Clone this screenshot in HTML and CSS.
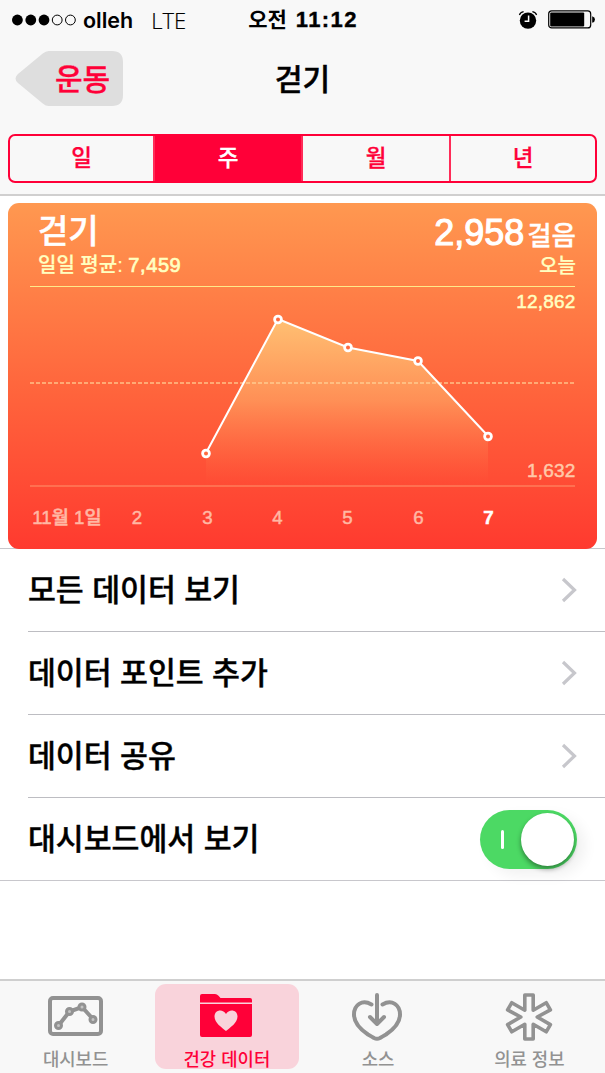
FILE: index.html
```
<!DOCTYPE html>
<html lang="ko">
<head>
    <meta charset="UTF-8">
    <meta name="viewport" content="width=device-width, initial-scale=1.0">
    <title>걷기</title>
    <link rel="stylesheet" href="styles.css">
</head>
<body>
    <header class="header">
        <div class="status">
            <div class="status-left">
                <svg class="signal" width="65" height="12" viewBox="0 0 65 12">
                    <circle cx="5.4" cy="6" r="5.4" />
                    <circle cx="18.8" cy="6" r="5.4" />
                    <circle cx="32" cy="6" r="5.4" />
                    <circle class="empty" cx="45.200" cy="6" r="4.9" />
                    <circle class="empty" cx="58.400" cy="6" r="4.9" />
                </svg>
                <span class="carrier">olleh</span>
                <span class="network">LTE</span>
            </div>
            <div class="clock"><span class="clock-ampm">오전</span><span>11:12</span></div>
            <div class="status-right">
                <svg width="20" height="20" viewBox="0 0 20 20">
                    <circle cx="10" cy="10.6" r="8.2" />
                    <path d="M1.4 5 Q2.4 2 5.6 1.6 M14.4 1.6 Q17.6 2 18.6 5" fill="none" stroke="#000" stroke-width="1.2" />
                    <path d="M10.6 5.5 V11.3 H6.6" fill="none" stroke="#fff" stroke-width="1.5" />
                </svg>
                <svg width="48" height="19" viewBox="0 0 48 19">
                    <rect x="0.7" y="0.9" width="42" height="17" rx="3" fill="none" stroke="#000" stroke-width="1.2" />
                    <rect x="2.2" y="2.4" width="34" height="14" rx="1" />
                    <path d="M44.2 6.2 Q47 7 47 9.5 T44.2 12.8 Z" />
                </svg>
            </div>
        </div>

        <nav class="nav">
            <a class="back">
                <svg class="back-shape" width="108" height="55" viewBox="0 0 109 55" preserveAspectRatio="none">
                    <path d="M34 0 H98 Q109 0 109 11 V44 Q109 55 98 55 H34 Q31 55 28 52.5 L3 32 Q-2 27.500 3 23 L28 2.500 Q31 0 34 0 Z" />
                </svg>
                <span>운동</span>
            </a>
            <h1 class="title">걷기</h1>
        </nav>

        <div class="segments">
            <span class="segment">일</span>
            <span class="segment active">주</span>
            <span class="segment">월</span>
            <span class="segment">년</span>
        </div>
    </header>

    <main>
        <section class="card">
            <div class="card-top">
                <div class="card-info">
                    <h2 class="card-title">걷기</h2>
                    <p class="card-text">일일 평균: <span class="num">7,459</span></p>
                </div>
                <div class="card-info right">
                    <p class="card-value"><span class="big">2,958</span>걸음</p>
                    <p class="card-text">오늘</p>
                </div>
            </div>
            <svg class="chart" width="589" height="273" viewBox="0 0 589 273">
                <defs>
                    <linearGradient id="area" x1="0" y1="44" x2="0" y2="208" gradientUnits="userSpaceOnUse">
                        <stop offset="0" stop-color="#ffc878" stop-opacity="0.9" />
                        <stop offset="0.5" stop-color="#ffb069" stop-opacity="0.58" />
                        <stop offset="1" stop-color="#ff8050" stop-opacity="0" />
                    </linearGradient>
                </defs>
                <path class="area" d="M198 178 L270 44 L340 72.500 L410 86 L480 161 V208 H198 Z" />
                <line class="line-top" x1="22" y1="11.500" x2="567" y2="11.500" />
                <line class="line-avg" x1="22" y1="108" x2="567" y2="108" />
                <line class="line-bottom" x1="22" y1="211" x2="567" y2="211" />
                <polyline class="trend" points="198,178 270,44 340,72.500 410,86 480,161" />
                <g class="dots">
                    <circle cx="198" cy="178.500" r="3.400" />
                    <circle cx="270" cy="44.500" r="3.400" />
                    <circle cx="340" cy="72.500" r="3.400" />
                    <circle cx="410" cy="86" r="3.400" />
                    <circle cx="480" cy="161.500" r="3.400" />
                </g>
                <text class="max" x="567.500" y="33">12,862</text>
                <text class="min" x="567.500" y="202">1,632</text>
                <g class="axis">
                    <text x="59" y="249">11월 1일</text>
                    <text x="129" y="249">2</text>
                    <text x="199.500" y="249">3</text>
                    <text x="269.500" y="249">4</text>
                    <text x="339.500" y="249">5</text>
                    <text x="410.500" y="249">6</text>
                    <text class="today" x="480.500" y="249">7</text>
                </g>
            </svg>
        </section>

        <ul class="list">
            <li class="item">
                <span class="item-text">모든 데이터 보기</span>
                <svg class="arrow" width="16" height="26" viewBox="0 0 16 26"><path d="M2 2 L13.500 13 L2 24" /></svg>
            </li>
            <li class="item">
                <span class="item-text">데이터 포인트 추가</span>
                <svg class="arrow" width="16" height="26" viewBox="0 0 16 26"><path d="M2 2 L13.500 13 L2 24" /></svg>
            </li>
            <li class="item">
                <span class="item-text">데이터 공유</span>
                <svg class="arrow" width="16" height="26" viewBox="0 0 16 26"><path d="M2 2 L13.500 13 L2 24" /></svg>
            </li>
            <li class="item">
                <span class="item-text">대시보드에서 보기</span>
                <span class="switch"><span class="switch-on"></span><span class="switch-knob"></span></span>
            </li>
        </ul>
    </main>

    <footer class="tabs">
        <a class="tab">
            <svg width="56" height="48" viewBox="0 0 56 48">
                <rect x="2" y="5" width="51" height="36" rx="3" fill="none" stroke="#929292" stroke-width="4" />
                <path d="M10.500 32.500 L21.500 18.500 L34 14 L45 26" fill="none" stroke="#929292" stroke-width="4" />
                <g fill="#c4c4c4" stroke="#929292" stroke-width="3">
                    <circle cx="10.500" cy="32.500" r="3" />
                    <circle cx="21.500" cy="18.500" r="3" />
                    <circle cx="34" cy="14" r="3" />
                    <circle cx="45" cy="26.500" r="3" />
                </g>
            </svg>
            <span>대시보드</span>
        </a>
        <a class="tab active">
            <svg width="56" height="48" viewBox="0 0 56 48">
                <path fill="#ff0038" d="M1 9.500 V3 Q1 1 3 1 H16 Q18 1 19.500 2.700 L21.500 5 H51 Q53 5 53 7 V9.500 Z" />
                <path fill="#ff0038" d="M1 11 H53 V42 Q53 44 51 44 H3 Q1 44 1 42 Z" />
                <path fill="#f9d3db" d="M27 38 C23 34.500 15.500 30 15.500 23.500 C15.500 16.500 24 15.500 27 21 C30 15.500 38.500 16.500 38.500 23.500 C38.500 30 31 34.500 27 38 Z" />
            </svg>
            <span>건강 데이터</span>
        </a>
        <a class="tab">
            <svg width="54" height="48" viewBox="0 0 54 48">
                <g fill="none" stroke="#929292" stroke-width="4" stroke-linecap="round" stroke-linejoin="round">
                    <path d="M20.500 11.500 C11 6 3 12 3 21.500 C3 30.500 11 37.500 17 41.500 Q20.500 43.500 23 45 Q26 46.500 29 45 Q31.500 43.500 35 41.500 C41 37.500 49 30.500 49 21.500 C49 12 41 6 31.500 11.500" />
                    <path d="M26 2 V31 M19 24 L26 31 L33 24" />
                </g>
            </svg>
            <span>소스</span>
        </a>
        <a class="tab">
            <svg width="49" height="48" viewBox="0 0 49 48">
                <path fill="none" stroke="#929292" stroke-width="3.600" stroke-linejoin="round" d="M19.800 2 H28.200 V17.200 L41.200 9.700 L45.400 16.900 L32.200 24 L45.400 31.600 L41.200 38.800 L28.200 31.300 V46 H19.800 V31.300 L6.800 38.800 L2.600 31.600 L15.800 24 L2.600 16.900 L6.800 9.700 L19.800 17.200 Z" />
            </svg>
            <span>의료 정보</span>
        </a>
    </footer>
</body>
</html>
```
FILE: styles.css
```
* {
    box-sizing: border-box;
}

body {
    display: flex;
    flex-direction: column;
    height: 1073px;
    margin: 0;
    overflow: hidden;
    background-color: #fff;
    color: #000;
    font-family: "Liberation Sans", "Noto Sans CJK KR", sans-serif;
    font-weight: 500;
}

h1, h2, p, ul {
    margin: 0;
    padding: 0;
    font-weight: 500;
}

svg {
    display: block;
    flex-shrink: 0;
}

main {
    flex: 1;
}

/* header */
.header {
    height: 196px;
    padding: 0 8px;
    background-color: #f8f8f8;
    border-bottom: 2px solid #d0cfcf;
}

.status {
    display: grid;
    grid-template-columns: 1fr auto 1fr;
    align-items: center;
    height: 39px;
    padding: 0 1px 0 4px;
}

.status-left,
.status-right {
    display: flex;
    align-items: center;
}

.status-right {
    justify-content: flex-end;
    gap: 10px;
}

.signal .empty {
    fill: none;
    stroke: #000;
    stroke-width: 1;
}

.carrier {
    margin-left: 6px;
    font-size: 21.5px;
    font-family: Inter, sans-serif;
    font-weight: 600;
}

.network {
    margin-left: 18px;
    font-family: "Open Sans", sans-serif;
    font-size: 22px;
    font-weight: 300;
    -webkit-text-stroke: 0.2px;
}

.clock {
    display: flex;
    align-items: center;
    gap: 9px;
    margin-left: -2px;
    font-size: 22px;
    font-weight: bold;
    letter-spacing: 1.4px;
    line-height: 39px;
    -webkit-text-stroke: 0.4px;
}

.clock-ampm {
    font-size: 21px;
    letter-spacing: 0;
    -webkit-text-stroke: 0;
}

.nav {
    display: grid;
    grid-template-columns: 1fr auto 1fr;
    align-items: center;
    height: 79px;
    padding-left: 7px;
}

.back {
    position: relative;
    width: 108px;
    height: 55px;
    padding-left: 40px;
    color: #ff0038;
    font-size: 30px;
    line-height: 57px;
    -webkit-text-stroke: 0.3px;
}

.back span {
    position: relative;
}

.back-shape {
    position: absolute;
    top: 0;
    left: 0;
    fill: #dedede;
}

.title {
    margin-left: -7px;
    font-size: 30px;
    line-height: 55px;
    padding-top: 2px;
    -webkit-text-stroke: 0.5px;
}

.segments {
    display: grid;
    grid-template-columns: 143px 148px 148px 1fr;
    height: 49px;
    margin-top: 16px;
    border: 2px solid #ff0038;
    border-radius: 7px;
    overflow: hidden;
}

.segment {
    color: #ff0038;
    font-size: 22.5px;
    line-height: 46px;
    text-align: center;
    -webkit-text-stroke: 0.3px;
}

.segment + .segment {
    border-left: 2px solid #ff2c58;
}

.segment.active {
    background-color: #ff0038;
    color: #fff;
}

/* chart card */
.card {
    position: relative;
    width: 589px;
    height: 346px;
    margin: 7px 8px 0;
    border-radius: 11px;
    background: linear-gradient(#ff9850, #ff643c 55%, #ff3a2f);
    color: #fff;
}

.card-top {
    display: flex;
    justify-content: space-between;
    height: 72px;
    padding: 10px 21px 0 30px;
}

.card-title {
    font-size: 33px;
    line-height: 38px;
    -webkit-text-stroke: 0.5px;
}

.card-text {
    color: #ffffc0;
    font-size: 20px;
    line-height: 28px;
    -webkit-text-stroke: 0.2px;
}

.right {
    text-align: right;
}

.right .card-text {
    line-height: 20px;
}

.card-value {
    font-size: 26.5px;
    line-height: 40px;
    -webkit-text-stroke: 0.3px;
}

.num {
    letter-spacing: 0.6px;
    -webkit-text-stroke: 0.7px;
}

.big {
    margin-right: 3px;
    font-size: 36px;
    -webkit-text-stroke: 1.1px;
}

.area {
    fill: url(#area);
}

.line-top {
    stroke: #ffe98a;
    stroke-width: 1;
}

.line-avg {
    stroke: #ffd79b;
    stroke-opacity: 0.6;
    stroke-width: 2;
    stroke-dasharray: 4 2;
}

.line-bottom {
    stroke: #ff7050;
    stroke-width: 2;
}

.trend {
    fill: none;
    stroke: #fff;
    stroke-width: 2;
}

.dots {
    fill: #ff6a40;
    stroke: #fff;
    stroke-width: 2.8;
}

.max,
.min {
    fill: #ffffc0;
    stroke: #ffffc0;
    stroke-width: 0.5;
    font-size: 19px;
    letter-spacing: 0.2px;
    text-anchor: end;
}

.min {
    fill: #ffc8a8;
    stroke: #ffc8a8;
}

.axis {
    fill: #ffb8a4;
    stroke: #ffb8a4;
    stroke-width: 0.5;
    font-size: 18.7px;
    text-anchor: middle;
}

.today {
    fill: #fff;
    stroke: #fff;
    font-weight: bold;
}

/* list */
.list {
    margin-top: -1px;
    border-bottom: 1px solid #c8c7cc;
    list-style: none;
}

.item {
    display: flex;
    align-items: center;
    justify-content: space-between;
    height: 83px;
    margin-left: 28px;
    padding-right: 28px;
    font-size: 30.3px;
}

.item:first-child {
    margin-left: 0;
    padding-left: 28px;
    border-top: 1px solid #c8c7cc;
}

.item + .item {
    border-top: 1px solid #bdbdc2;
}

.item-text {
    padding-bottom: 5px;
    -webkit-text-stroke: 0.4px;
}

.arrow path {
    fill: none;
    stroke: #c7c7cc;
    stroke-width: 3.2;
}

.switch {
    display: flex;
    align-items: center;
    justify-content: space-between;
    width: 97px;
    height: 59px;
    padding: 0 3px 0 21px;
    border-radius: 30px;
    background-color: #4cd964;
    box-shadow: 8px 6px 14px rgba(0, 0, 0, 0.06);
}

.switch-on {
    width: 3px;
    height: 19px;
    border-radius: 2px;
    background-color: #fff;
}

.switch-knob {
    width: 53px;
    height: 53px;
    border-radius: 50%;
    background-color: #fff;
    box-shadow: 0 3px 5px rgba(0, 0, 0, 0.4);
}

/* tab bar */
.tabs {
    display: grid;
    grid-template-columns: repeat(4, 1fr);
    height: 94px;
    border-top: 2px solid #cfcfcf;
    background-color: #f8f8f8;
}

.tab {
    display: flex;
    flex-direction: column;
    align-items: center;
    height: 85px;
    margin: 3px 4px 0;
    padding-top: 9px;
    color: #929292;
    font-size: 17.8px;
    line-height: 38px;
}

.tab.active {
    border-radius: 11px;
    background-color: #f9d3db;
    color: #ff0038;
}
```
